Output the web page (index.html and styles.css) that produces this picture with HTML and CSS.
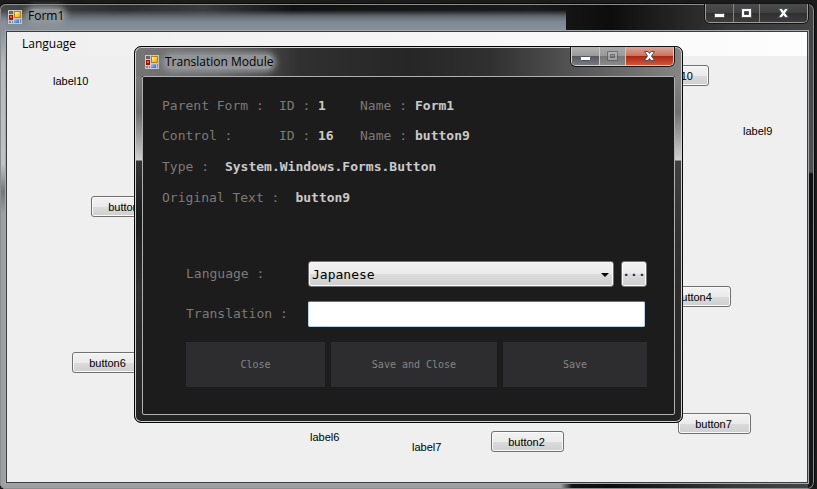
FILE: index.html
```html
<!DOCTYPE html>
<html lang="en">
<head>
<meta charset="utf-8">
<title>Form1</title>
<link rel="stylesheet" href="styles.css">
</head>
<body>
<svg class="defs" aria-hidden="true">
  <defs>
    <linearGradient id="gold" x1="0" y1="0" x2="1" y2="1"><stop offset="0" stop-color="#fff3b0"/><stop offset="1" stop-color="#eaa500"/></linearGradient>
    <linearGradient id="blue" x1="0" y1="0" x2="1" y2="1"><stop offset="0" stop-color="#a9ccff"/><stop offset="1" stop-color="#2468d8"/></linearGradient>
  </defs>
  <symbol id="form-icon" viewBox="0 0 14 14">
    <rect width="14" height="14" fill="#c9c9c9"/>
    <rect x="1" y="1" width="4" height="3" fill="#666"/>
    <rect x="1" y="5" width="4" height="5" fill="#a31108"/><rect x="2" y="6" width="2" height="2" fill="#e8584c"/>
    <rect x="6" y="1" width="7" height="7" fill="#bd8100"/><rect x="7" y="2" width="5" height="5" fill="url(#gold)"/>
    <rect x="6" y="9" width="5" height="4" fill="url(#blue)"/>
    <rect x="1" y="11" width="2" height="2" fill="#888"/><rect x="4" y="11" width="1" height="2" fill="#888"/><rect x="12" y="9" width="1" height="4" fill="#888"/>
  </symbol>
  <symbol id="minimize" viewBox="0 0 13 11"><rect x="1.500" y="5.500" width="10" height="4" rx="1" fill="#fff" stroke="#4c5260"/></symbol>
  <symbol id="maximize" viewBox="0 0 13 11"><path d="M1.500.5h10v9h-10zM4.500 3.500h4v3h-4z" fill="currentColor" fill-rule="evenodd" stroke="#4c5260"/></symbol>
  <symbol id="close" viewBox="0 0 13 11"><path d="M1.500.5h3.500l1.500 2 1.500-2h3.500L8.500 5l3 4.500H8l-1.500-2-1.500 2H1.500l3-4.500z" fill="#fff" stroke="#4c5260"/></symbol>
</svg>

<main class="window">
  <header class="titlebar">
    <svg class="app-icon" aria-hidden="true"><use href="#form-icon"/></svg>
    <h1 class="title">Form1</h1>
    <div class="caption">
      <button class="cap" aria-label="Minimize"><svg><use href="#minimize"/></svg></button>
      <button class="cap cap-mid" aria-label="Maximize"><svg><use href="#maximize"/></svg></button>
      <button class="cap cap-close" aria-label="Close window"><svg><use href="#close"/></svg></button>
    </div>
  </header>
  <div class="client">
    <nav class="menubar"><a class="menu-item" href="#">Language</a></nav>
    <div class="surface">
      <span class="node label10">label10</span>
      <span class="node label9">label9</span>
      <span class="node label6">label6</span>
      <span class="node label7">label7</span>
      <button class="node btn button10">button10</button>
      <button class="node btn button9">button9</button>
      <button class="node btn button4">button4</button>
      <button class="node btn button6">button6</button>
      <button class="node btn button7">button7</button>
      <button class="node btn button2">button2</button>
    </div>
  </div>
</main>

<section class="dialog" role="dialog" aria-labelledby="dialog-title">
  <header class="titlebar dialog-bar">
    <svg class="app-icon" aria-hidden="true"><use href="#form-icon"/></svg>
    <h2 class="title" id="dialog-title">Translation Module</h2>
    <div class="caption">
      <button class="cap" aria-label="Minimize dialog"><svg><use href="#minimize"/></svg></button>
      <button class="cap cap-mid" aria-label="Maximize dialog" disabled><svg><use href="#maximize"/></svg></button>
      <button class="cap cap-close cap-red" aria-label="Close dialog"><svg><use href="#close"/></svg></button>
    </div>
  </header>
  <div class="panel">
    <div class="info">
      <span>Parent Form :</span><span>ID :</span><b>1</b><span>Name :</span><b>Form1</b>
      <span>Control :</span><span>ID :</span><b>16</b><span>Name :</span><b>button9</b>
    </div>
    <p class="line"><span>Type :</span><b>System.Windows.Forms.Button</b></p>
    <p class="line"><span>Original Text :</span><b>button9</b></p>
    <form class="form">
      <div class="field">
        <label for="language">Language :</label>
        <div class="combo"><select id="language"><option>Japanese</option></select></div>
        <button class="more" type="button" aria-label="Browse languages">...</button>
      </div>
      <div class="field">
        <label for="translation">Translation :</label>
        <input id="translation" type="text">
      </div>
      <div class="actions">
        <button type="button">Close</button>
        <button type="button">Save and Close</button>
        <button type="button">Save</button>
      </div>
    </form>
  </div>
</section>
</body>
</html>
```

FILE: styles.css
```css
* { box-sizing: border-box; }

body {
  margin: 0;
  min-height: 100vh;
  display: flex;
  flex-direction: column;
  position: relative;
  background: #1b1b1b;
  color: #000;
  font: 11px/14px "Liberation Sans", Arial, sans-serif;
}

button, input, select { font: inherit; }

.defs { position: absolute; width: 0; height: 0; }

/* Glass window frame */
.window {
  flex: 1;
  display: flex;
  flex-direction: column;
  margin: 3px 2px 0 0;
  padding: 0 6px 6px;
  border: solid #080808;
  border-width: 1px 1px 0 0;
  border-radius: 6px 7px 7px 6px;
  box-shadow: inset 0 0 0 1px #8b8d8f;
  background:
    linear-gradient(90deg, #a0a0a0 98%, transparent) 0 100% / 572px 8px no-repeat,
    linear-gradient(transparent 8px, #8a929c 26px, #b5b9bc 60px, #c0c3c5 160px, #777 188px, #a0a0a0 210px) 0 0 / 6px 100% no-repeat,
    linear-gradient(transparent 6px, #5f666e 12px, #7f8994 18px, #88929d) 0 0 / 566px 28px no-repeat,
    linear-gradient(#444, #505050 140px, #111 142px, #1a1a1a) 100% 28px / 6px 100% no-repeat,
    linear-gradient(90deg, #484848, #2c2c2c 15%, #3a3a3a 25%, #111 36%, #1a1a1a 65%, #0d0d0d 75%, #383838 90%, #444);
}

.titlebar {
  flex: none;
  height: 27px;
  display: flex;
  align-items: flex-start;
  gap: 6px;
  padding-left: 2px;
}

.app-icon { width: 14px; height: 14px; margin-top: 6px; }

/* Soft halo keeps dark captions readable on the glass */
.title {
  margin: 5px auto 0 0;
  border-radius: 8px;
  background: #929598;
  box-shadow: 0 0 6px 3px #929598;
  font: 12px/14px "Open Sans", "Noto Sans", sans-serif;
}

.caption {
  display: flex;
  height: 19px;
  border: 1px solid #9a9a9a;
  border-top: 0;
  border-radius: 0 0 5px 5px;
  overflow: hidden;
  box-shadow: 0 0 0 1px #151515;
}

.cap {
  width: 28px;
  padding: 0;
  border: 0;
  border-right: 1px solid #858585;
  display: flex;
  align-items: center;
  justify-content: center;
  color: #fff;
  background: linear-gradient(#4c4c4c, #404040 50%, #303030 52%, #3c3c3c);
}

.cap svg { width: 13px; height: 11px; }
.cap-mid { width: 26px; }
.cap-close { width: 47px; border-right: 0; }

.client {
  flex: 1;
  display: flex;
  flex-direction: column;
  border: 1px solid #3a3d40;
  box-shadow: 0 0 0 1px #a5a8aa;
  background: #efefef;
}

.menubar {
  height: 24px;
  padding: 4px 15px;
  background: linear-gradient(90deg, #efefef, #f3f3f3 30%, #fdfdfd);
  font: 12px/16px "Open Sans", "Noto Sans", sans-serif;
}

.menu-item { color: #000; text-decoration: none; }

/* Freely placed form controls */
.surface { flex: 1; position: relative; }
.node { position: absolute; }

.btn {
  width: 73px;
  height: 21px;
  padding: 0 2px 0 0;
  border: 1px solid #707070;
  border-radius: 3px;
  box-shadow: inset 0 0 0 1px #fafafa;
  background: linear-gradient(#f2f2f2, #ebebeb 50%, #dcdcdc 50%, #cfcfcf);
  color: #000;
}

.label10 { left: 46px; top: 18px; }
.label9 { left: 736px; top: 68px; }
.label6 { left: 303px; top: 374px; }
.label7 { left: 405px; top: 384px; }
.button10 { left: 629px; top: 9px; }
.button9 { left: 84px; top: 140px; }
.button4 { left: 651px; top: 230px; }
.button6 { left: 65px; top: 296px; }
.button7 { left: 671px; top: 357px; }
.button2 { left: 484px; top: 375px; }

/* Translation dialog */
.dialog {
  position: absolute;
  top: 46px;
  left: 134px;
  right: 134px;
  padding: 0 7px 7px;
  border: 1px solid #050505;
  border-radius: 7px;
  box-shadow: inset 0 0 0 1px #d2d2d2;
  background:
    linear-gradient(90deg, #757575, #666 15%, #303030 30%, #262626 50%, #303030 65%, #606060 85%, #858585) 0 0 / 100% 29px no-repeat,
    linear-gradient(#7a7a7a 29px, #6a6a6a 65px, #d0d0d0 113px, #343434 114px, #1c1c1c 170px, #303030 240px, #252525) 0 0 / 7px 100% no-repeat,
    linear-gradient(#858585 29px, #707070 65px, #d0d0d0 113px, #404040 114px, #303030 200px, #252525) 100% 0 / 7px 100% no-repeat,
    #222423;
}

.dialog-bar { height: 29px; padding: 0 1px 0 3px; }
.dialog-bar .app-icon { margin-top: 8px; }
.dialog-bar .title { margin-top: 8px; }

.dialog .caption { border-color: #d0d0d0; }

.dialog .cap {
  border-color: #c8c8c8;
  background: linear-gradient(#b4b4b4, #999 50%, #55585c 52%, #777b80);
}

.dialog .cap:disabled { color: #bbb; background: linear-gradient(#aaa, #999 50%, #777 52%, #8a8a8a); }
.dialog .cap:disabled svg { opacity: .6; }
.dialog .cap-red { background: linear-gradient(#dba79b, #c9705e 50%, #ab2810 52%, #d0573a); }

.panel {
  padding: 14px 27px 27px 19px;
  border: 1px solid #b0b0b0;
  border-radius: 2px;
  background: #1c1c1c;
  color: #7d7a77;
  font: 13px/30px "DejaVu Sans Mono", monospace;
}

.panel b { color: #cacaca; }

.info {
  display: grid;
  grid-template-columns: 117px 39px 42px 55px 1fr;
}

.line { margin: 0; display: flex; gap: 16px; line-height: 31px; }

.form {
  margin: 48px 0 0 24px;
  display: flex;
  flex-direction: column;
  gap: 14px;
}

.field { display: flex; height: 26px; line-height: 26px; }
.field label { width: 122px; }

.combo { flex: 1; position: relative; margin-right: 7px; }

.combo::after {
  content: "";
  position: absolute;
  right: 5px;
  top: 12px;
  border: 4px solid transparent;
  border-top-color: #000;
  border-bottom: 0;
  pointer-events: none;
}

.combo select, .more {
  height: 26px;
  border: 1px solid #707070;
  border-radius: 3px;
  box-shadow: inset 0 0 0 1px #fafafa;
  background: linear-gradient(#f2f2f2, #ebebeb 50%, #dcdcdc 50%, #cfcfcf);
  color: #000;
}

.combo select {
  appearance: none;
  display: block;
  width: 100%;
  padding: 0 20px 0 3px;
}

.more { width: 26px; padding: 0 0 4px; line-height: 20px; font-weight: bold; color: #1b2b4b; }

.field input {
  flex: 1;
  min-width: 0;
  margin-right: 2px;
  padding: 0 4px;
  border: 1px solid #b5d4e8;
  border-top-color: #3d7bad;
  border-radius: 2px;
  background: #fff;
}

.actions {
  display: grid;
  grid-template-columns: 139fr 166fr 144fr;
  gap: 6px;
  padding-top: 1px;
}

.actions button {
  height: 45px;
  padding: 0;
  border: 0;
  background: #2d2d30;
  color: #858585;
  font-size: 10px;
}
```
